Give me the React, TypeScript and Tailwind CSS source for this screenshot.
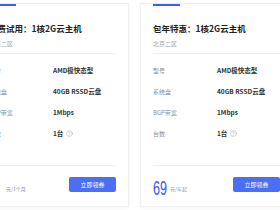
import React from "react";
import { CircleHelp } from "lucide-react";

interface Plan {
  title: string;
  region: string;
  price: string;
  unit: string;
}

const plans: Plan[] = [
  { title: "免费试用：1核2G云主机", region: "北京二区", price: "0", unit: "元/1个月" },
  { title: "包年特惠：1核2G云主机", region: "北京二区", price: "69", unit: "元/年起" },
];

const specs = [
  { label: "型号", value: "AMD极快态型" },
  { label: "系统盘", value: "40GB RSSD云盘" },
  { label: "BGP带宽", value: "1Mbps" },
  { label: "台数", value: "1台", help: true },
];

function PlanCard({ plan }: { plan: Plan }) {
  return (
    <div className="relative w-[153px] h-[204px] shrink-0 bg-white border border-[#eef0f4] shadow-[0_1px_4px_rgba(30,40,80,0.05)] px-3 pt-[18px]">
      {/* 顶部蓝色短线 */}
      <div className="absolute top-0 left-3 w-[27px] h-[2px] bg-[#3f5ef0]" />
      <div className="text-[8.5px] leading-[12px] font-semibold text-[#222] whitespace-nowrap">
        {plan.title}
      </div>
      <div className="mt-[5px] text-[6px] leading-[9px] text-[#a2a6ae]">{plan.region}</div>
      <div className="mt-[5px] border-t border-[#f0f1f4]" />
      <div className="mt-[6px]">
        {specs.map((s) => (
          <div key={s.label} className="flex items-center h-[21px]">
            <span className="w-[64px] text-[6px] text-[#8a8f99]">{s.label}</span>
            <span className="flex items-center gap-[3px] text-[6.5px] font-semibold text-[#333]">
              {s.value}
              {s.help && <CircleHelp size={7} strokeWidth={1.5} className="text-[#9aa0aa]" />}
            </span>
          </div>
        ))}
      </div>
      <div className="mt-[21px] border-t border-[#f0f1f4]" />
      <div className="mt-[10px] flex items-center justify-between">
        <div className="flex items-end">
          <span className="inline-block w-[14px] h-[16px]">
            <span className="inline-block origin-top-left scale-x-[0.6] text-[21px] leading-[16px] font-normal text-[#3a57e8] font-['Liberation_Sans',sans-serif]">
              {plan.price}
            </span>
          </span>
          <span className="ml-[3px] text-[5px] leading-[7px] text-[#8a8f99]">{plan.unit}</span>
        </div>
        <button className="w-[47px] h-[15px] rounded-[2px] bg-[#4a6ef5] text-white text-[6px] leading-[15px]">
          立即领券
        </button>
      </div>
    </div>
  );
}

export default function App() {
  return (
    <div className="w-[280px] h-[210px] overflow-hidden bg-white font-['Noto_Sans_CJK_SC','Noto_Sans',sans-serif]">
      <div className="flex gap-[11px] ml-[-24px] pt-[3px]">
        {plans.map((p) => (
          <PlanCard key={p.title} plan={p} />
        ))}
      </div>
    </div>
  );
}
